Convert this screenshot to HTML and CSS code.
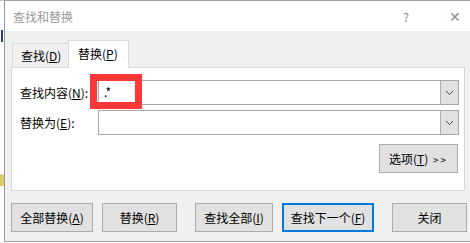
FILE: index.html
```
<!DOCTYPE html>
<html lang="zh-CN">
<head>
  <meta charset="UTF-8" />
  <title>查找和替换</title>
  <link rel="stylesheet" href="styles.css">
</head>
<body>
  <div class="behind">
    <div class="behind-stroke"></div>
    <div class="behind-mark"></div>
  </div>

  <div class="dialog">
    <div class="title-bar">
      <div class="title">查找和替换</div>
      <div class="title-btn help">?</div>
      <div class="title-btn close">✕</div>
    </div>

    <div class="dialog-body">
      <div class="tabs">
        <div class="tab">查找(<u>D</u>)</div>
        <div class="tab active">替换(<u>P</u>)</div>
      </div>

      <div class="panel">
        <div class="field-row">
          <label class="field-label">查找内容(<u>N</u>):</label>
          <div class="combo">
            <div class="combo-text">.*</div>
            <div class="combo-drop">
              <svg width="9" height="6" viewBox="0 0 9 6"><path d="M1 1 L4.5 4.5 L8 1" fill="none" stroke="#444" stroke-width="1"/></svg>
            </div>
            <div class="highlight"></div>
          </div>
        </div>
        <div class="field-row">
          <label class="field-label">替换为(<u>E</u>):</label>
          <div class="combo">
            <div class="combo-text"></div>
            <div class="combo-drop">
              <svg width="9" height="6" viewBox="0 0 9 6"><path d="M1 1 L4.5 4.5 L8 1" fill="none" stroke="#444" stroke-width="1"/></svg>
            </div>
          </div>
        </div>
        <div class="options-row">
          <button class="btn options-btn">选项(<u>T</u>) <span class="chev">&gt;&gt;</span></button>
        </div>
      </div>

      <div class="button-row">
        <button class="btn btn-all">全部替换(<u>A</u>)</button>
        <button class="btn btn-replace">替换(<u>R</u>)</button>
        <button class="btn btn-findall">查找全部(<u>I</u>)</button>
        <button class="btn btn-next">查找下一个(<u>F</u>)</button>
        <button class="btn btn-close">关闭</button>
      </div>
    </div>
  </div>
</body>
</html>
```

FILE: styles.css
```
* { box-sizing: border-box; }

body {
  margin: 0;
  width: 470px;
  height: 243px;
  overflow: hidden;
  display: flex;
  font-family: "Noto Sans CJK SC", "Noto Sans", sans-serif;
  font-size: 12px;
  color: #000;
  background: #ffffff;
}

.behind {
  width: 4px;
  flex-shrink: 0;
  background: #fdfdfd;
  border-top: 1px solid #c8c8c8;
  display: flex;
  flex-direction: column;
}

.behind-stroke {
  margin-top: 29px;
  width: 2px;
  height: 12px;
  margin-left: 1px;
  background: #2a3f8f;
}

.behind-mark {
  margin-top: 132px;
  height: 12px;
  background: #d9cf62;
  border-top: 1px solid #d8d8d8;
}

.dialog {
  flex-grow: 1;
  height: 242px;
  display: flex;
  flex-direction: column;
  border-left: 1px solid #9a9a9a;
  border-top: 1px solid #a0a0a0;
  border-bottom: 1px solid #a0a0a0;
  background: #f0f0f0;
}

.title-bar {
  height: 30px;
  display: flex;
  align-items: center;
  background: #ffffff;
  padding-left: 8px;
}

.title {
  flex-grow: 1;
  color: #9a9a9a;
  font-size: 12px;
}

.title-btn {
  color: #8a8a8a;
  text-align: center;
}

.help {
  width: 14px;
  margin-right: 35px;
  font-size: 12px;
}

.close {
  width: 14px;
  margin-right: 10px;
  font-size: 14px;
  font-weight: 300;
}

.dialog-body {
  flex-grow: 1;
  padding: 9px 5px 9px 6px;
  display: flex;
  flex-direction: column;
}

.tabs {
  height: 27px;
  display: flex;
  align-items: flex-end;
  padding-left: 1px;
}

.tab {
  height: 24px;
  width: 57px;
  padding-left: 8px;
  white-space: nowrap;
  display: flex;
  align-items: center;
  border: 1px solid #d9d9d9;
  border-bottom: none;
  background: #f0f0f0;
}

.tab.active {
  height: 28px;
  width: 61px;
  margin-bottom: -1px;
  margin-left: -1px;
  background: #ffffff;
  padding-left: 9px;
  padding-bottom: 3px;
  position: relative;
  z-index: 1;
}

.panel {
  width: 454px;
  height: 124px;
  background: #ffffff;
  border: 1px solid #d9d9d9;
  padding: 12px 5px 0 8px;
}

.field-row {
  display: flex;
  align-items: center;
  height: 25px;
  margin-bottom: 5px;
}

.field-label {
  width: 78px;
  flex-shrink: 0;
}

.combo {
  flex-grow: 1;
  height: 25px;
  display: flex;
  border: 1px solid #a8a8a8;
  background: #ffffff;
  position: relative;
}

.combo-text {
  flex-grow: 1;
  padding-left: 5px;
  line-height: 22px;
}

.combo-drop {
  width: 18px;
  background: #e1e1e1;
  border-left: 1px solid #adadad;
  display: flex;
  align-items: center;
  justify-content: center;
}

.highlight {
  position: absolute;
  left: -9px;
  top: -7px;
  width: 52px;
  height: 35px;
  border: 7px solid #fe3838;
  pointer-events: none;
}

.options-row {
  display: flex;
  justify-content: flex-end;
  margin-top: 9px;
  padding-right: 1px;
}

.btn {
  font-family: "Noto Sans CJK SC", "Noto Sans", sans-serif;
  font-size: 12px;
  color: #000;
  background: #e1e1e1;
  border: 1px solid #adadad;
  padding: 0;
  height: 29px;
  white-space: nowrap;
}

.options-btn {
  width: 79px;
  height: 29px;
}

.chev {
  font-size: 10px;
  letter-spacing: 2px;
  margin-left: 2px;
}

.button-row {
  display: flex;
  margin-top: 12px;
}

.btn-all { width: 82px; }
.btn-replace { width: 75px; margin-left: 9px; }
.btn-findall { width: 78px; margin-left: 18px; }
.btn-next {
  width: 92px;
  margin-left: 9px;
  border: 2px solid #0078d7;
}
.btn-close { width: 75px; margin-left: 18px; }
```
